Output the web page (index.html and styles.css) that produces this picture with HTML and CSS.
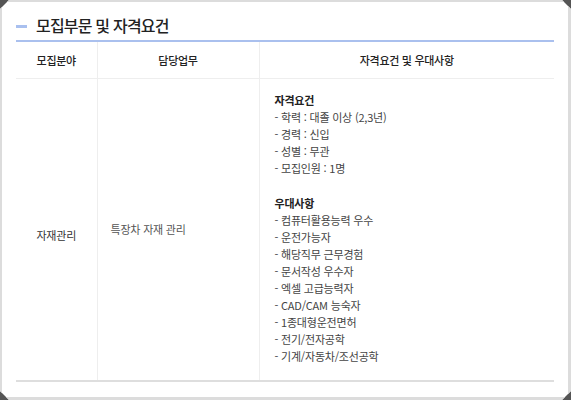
FILE: index.html
```html
<!DOCTYPE html>
<html lang="ko">
<head>
<meta charset="utf-8">
<link rel="stylesheet" href="styles.css">
</head>
<body>
<div class="frame">
  <h2 class="title"><span class="dash"></span>모집부문 및 자격요건</h2>
  <table class="recruit">
    <colgroup>
      <col class="c1"><col class="c2"><col class="c3">
    </colgroup>
    <thead>
      <tr><th>모집분야</th><th>담당업무</th><th>자격요건 및 우대사항</th></tr>
    </thead>
    <tbody>
      <tr>
        <td class="field">자재관리</td>
        <td class="duty">특장차 자재 관리</td>
        <td class="req">
          <strong>자격요건</strong>
          <p>- 학력 : 대졸 이상 (2,3년)</p>
          <p>- 경력 : 신입</p>
          <p>- 성별 : 무관</p>
          <p>- 모집인원 : 1명</p>
          <p class="blank">&nbsp;</p>
          <strong>우대사항</strong>
          <p>- 컴퓨터활용능력 우수</p>
          <p>- 운전가능자</p>
          <p>- 해당직무 근무경험</p>
          <p>- 문서작성 우수자</p>
          <p>- 엑셀 고급능력자</p>
          <p>- CAD/CAM 능숙자</p>
          <p>- 1종대형운전면허</p>
          <p>- 전기/전자공학</p>
          <p>- 기계/자동차/조선공학</p>
        </td>
      </tr>
    </tbody>
  </table>
</div>
</body>
</html>
```

FILE: styles.css
```css
html, body {
  margin: 0;
  padding: 0;
  background: #555;
}
body {
  font-family: "Noto Sans CJK KR", "Noto Sans", sans-serif;
  color: #444;
}
.frame {
  box-sizing: border-box;
  width: 571px;
  height: 400px;
  background: #fff;
  border-style: solid;
  border-color: #dcdcdc;
  border-width: 2px 3px 3px 2px;
  padding: 12px 13px 0 14px;
  clip-path: polygon(9px 0, calc(100% - 9px) 0, 100% 9px, 100% calc(100% - 9px), calc(100% - 9px) 100%, 9px 100%, 0 calc(100% - 9px), 0 9px);
}
.title {
  display: flex;
  align-items: center;
  margin: 0 0 4px;
  height: 22px;
  font-size: 16px;
  font-weight: 500;
  letter-spacing: -0.8px;
  color: #222;
}
.dash {
  display: block;
  width: 11px;
  height: 3px;
  background: #a9c0ef;
  margin: 2px 9px 0 0;
}
.recruit {
  width: 538px;
  border-collapse: collapse;
  table-layout: fixed;
  border-top: 2px solid #aac0ee;
  border-bottom: 2px solid #dedede;
}
.c1 { width: 81px; }
.c2 { width: 162px; }
.c3 { width: 295px; }
.recruit th {
  height: 36px;
  padding: 0;
  font-size: 11px;
  font-weight: 500;
  letter-spacing: -0.3px;
  color: #222;
  border-bottom: 1px solid #eee;
  border-left: 1px solid #eee;
  text-align: center;
}
.recruit td {
  font-size: 11px;
  letter-spacing: -0.2px;
  line-height: 17.1px;
  border-left: 1px solid #eee;
  vertical-align: middle;
}
.recruit th:first-child, .recruit td:first-child {
  border-left: none;
}
.field {
  text-align: center;
  color: #333;
  padding: 12px 0 0;
}
.duty {
  padding: 0 10px 0 13px;
  color: #555;
}
.req {
  padding: 13px 10px 14px 15px;
  color: #444;
}
.req strong {
  display: block;
  font-weight: 700;
  color: #222;
}
.req p {
  margin: 0;
}
```
